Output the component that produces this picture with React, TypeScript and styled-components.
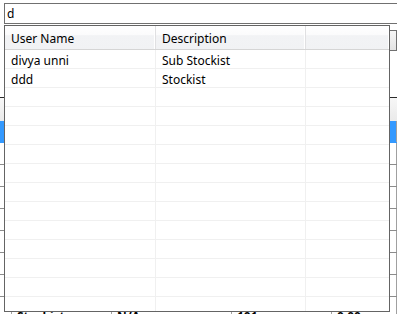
import styled, { createGlobalStyle } from "styled-components";

const GlobalStyle = createGlobalStyle`
  html, body {
    margin: 0;
    padding: 0;
    background: #ffffff;
  }
  body {
    font-family: "Noto Sans", "Open Sans", sans-serif;
    font-size: 12px;
    color: #000;
  }
`;

type Entry = { user: string; desc: string };

const matches: Entry[] = [
  { user: "divya unni", desc: "Sub Stockist" },
  { user: "ddd", desc: "Stockist" },
];

// grid behind the popup: only the last row peeks out below it
const BACK_ROWS = 9;
const lastBackRow = ["Stockist", "N/A", "101", "0.00"];

const POPUP_ROWS = 14;

export default function App() {
  const rows: (Entry | null)[] = Array.from(
    { length: POPUP_ROWS },
    (_, i) => matches[i] ?? null
  );
  const back = Array.from({ length: BACK_ROWS }, (_, i) =>
    i === BACK_ROWS - 1 ? lastBackRow : ["", "", "", ""]
  );

  return (
    <Screen>
      <GlobalStyle />

      <SearchRow>
        <SearchBox value="d" readOnly />
      </SearchRow>

      <ToolRow>
        <SideButton />
      </ToolRow>

      <BackGrid>
        <BackHeader />
        {back.map((r, i) => (
          <BackRow key={i} $selected={i === 0}>
            <BackCell $w={12} />
            <BackCell $w={100}>{r[0]}</BackCell>
            <BackCell $w={120}>{r[1]}</BackCell>
            <BackCell $w={100}>{r[2]}</BackCell>
            <BackCell $w={65}>{r[3]}</BackCell>
          </BackRow>
        ))}
      </BackGrid>

      {/* autocomplete dropdown */}
      <Popup>
        <ListHead>
          <HeadCell $w={151}>User Name</HeadCell>
          <HeadCell $w={150}>Description</HeadCell>
          <HeadCell $w={84} />
        </ListHead>
        {rows.map((r, i) => (
          <ListRow key={i}>
            <Cell $w={151}>{r?.user}</Cell>
            <Cell $w={150}>{r?.desc}</Cell>
            <Cell $w={84} />
          </ListRow>
        ))}
      </Popup>
    </Screen>
  );
}

const Screen = styled.div`
  position: relative;
  width: 397px;
  height: 314px;
  overflow: hidden;
`;

const SearchRow = styled.div`
  display: flex;
  padding: 3px 0 0 4px;
`;

const SearchBox = styled.input`
  box-sizing: border-box;
  width: 410px;
  height: 21px;
  margin: 0;
  padding: 0 0 0 2px;
  border: 1px solid #707070;
  border-right: none;
  font-family: "Noto Sans", "Open Sans", sans-serif;
  font-size: 12px;
  color: #000;
  outline: none;
`;

const ToolRow = styled.div`
  display: flex;
  justify-content: flex-end;
  margin-top: 6px;
  height: 21px;
`;

const SideButton = styled.div`
  box-sizing: border-box;
  width: 8px;
  height: 21px;
  border: 1px solid #707070;
  background: linear-gradient(#f6f6f6, #e3e3e3);
`;

const BackGrid = styled.div`
  margin-top: 46px;
  border-top: 1px solid #2b2b2b;
`;

const BackHeader = styled.div`
  height: 23px;
  background: linear-gradient(#f7f7f7, #eaeaea);
`;

const BackRow = styled.div<{ $selected?: boolean }>`
  display: flex;
  box-sizing: border-box;
  height: 22px;
  border-bottom: 1px solid ${({ $selected }) => ($selected ? "#3399ff" : "#8c8c8c")};
  background: ${({ $selected }) => ($selected ? "#3399ff" : "#fff")};
  color: ${({ $selected }) => ($selected ? "#fff" : "#000")};
  font-weight: 700;
`;

const BackCell = styled.div<{ $w: number }>`
  box-sizing: border-box;
  width: ${({ $w }) => $w}px;
  flex: none;
  padding: 13px 0 0 5px;
  border-right: 1px solid #a0a0a0;
  line-height: 14px;
  white-space: nowrap;
`;

const Popup = styled.div`
  position: absolute;
  left: 4px;
  top: 25px;
  box-sizing: border-box;
  width: 386px;
  height: 287px;
  border: 1px solid #646464;
  background: #fff;
  overflow: hidden;
`;

const ListHead = styled.div`
  display: flex;
  box-sizing: border-box;
  height: 24px;
  border-bottom: 1px solid #d5d5d5;
  background: linear-gradient(#ffffff 0%, #fbfbfc 38%, #f2f3f5 42%, #f1f2f4 100%);
`;

const HeadCell = styled.div<{ $w: number }>`
  box-sizing: border-box;
  width: ${({ $w }) => $w}px;
  flex: none;
  padding: 5px 0 0 6px;
  border-right: 1px solid #e0e0e2;
  box-shadow: inset -1px 0 0 #ffffff;
  line-height: 16px;
  white-space: nowrap;
`;

const ListRow = styled.div`
  display: flex;
  box-sizing: border-box;
  height: 19px;
  border-bottom: 1px solid #f0f0f0;
`;

const Cell = styled.div<{ $w: number }>`
  box-sizing: border-box;
  width: ${({ $w }) => $w}px;
  flex: none;
  padding: 3px 0 0 6px;
  border-right: 1px solid #f0f0f0;
  line-height: 15px;
  white-space: nowrap;
`;
